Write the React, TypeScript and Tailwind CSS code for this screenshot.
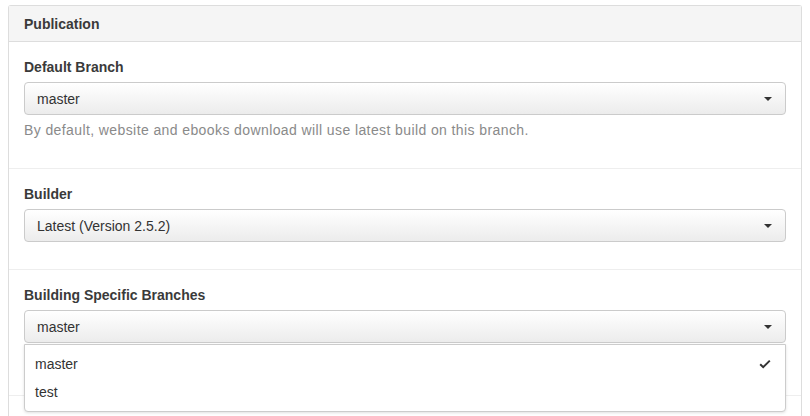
import React from "react";

function Caret() {
  return <span className="absolute right-[13px] top-1/2 -translate-y-1/2 w-0 h-0 border-l-[4px] border-r-[4px] border-t-[4px] border-l-transparent border-r-transparent border-t-[#333]" />;
}

function SelectBox({ value }: { value: string }) {
  return (
    <div className="relative h-[33px] rounded-[4px] border border-[#cbcbcb] bg-gradient-to-b from-[#ffffff] to-[#ececec] flex items-center pl-[12px] pt-[1px] text-[14px] text-[#333]">
      {value}
      <Caret />
    </div>
  );
}

export default function App() {
  return (
    <div className="w-[810px] h-[416px] overflow-hidden bg-white" style={{ fontFamily: '"Liberation Sans", Arial, sans-serif' }}>
      <div className="mx-2 mt-[5px] border border-[#dddddd] border-b-0 rounded-t-[3px] h-[420px]">
        <div className="h-[36px] bg-[#f5f5f5] border-b border-[#dddddd] flex items-center pt-[1px] px-[15px] text-[14px] font-bold text-[#3a3a3a]">
          Publication
        </div>
        <div className="px-[15px] pt-[15px] pb-[28px]">
          <div className="h-[20px] leading-[20px] text-[14px] font-bold text-[#3a3a3a] mb-[5px]">Default Branch</div>
          <SelectBox value="master" />
          <div className="mt-[5px] h-[20px] leading-[20px] text-[14px] tracking-[0.4px] text-[#8a8a8a]">
            By default, website and ebooks download will use latest build on this branch.
          </div>
        </div>
        <div className="border-t border-[#eeeeee] px-[15px] pt-[15px] pb-[27px]">
          <div className="h-[20px] leading-[20px] text-[14px] font-bold text-[#3a3a3a] mb-[5px]">Builder</div>
          <SelectBox value="Latest (Version 2.5.2)" />
        </div>
        <div className="border-t border-[#eeeeee] px-[15px] pt-[15px] pb-[52px]">
          <div className="h-[20px] leading-[20px] text-[14px] font-bold text-[#3a3a3a] mb-[5px]">Building Specific Branches</div>
          <div className="relative">
            <SelectBox value="master" />
            <div className="absolute left-0 right-0 top-[34px] z-10 bg-white border border-[#cccccc] rounded-b-[4px] shadow-[0_1px_3px_rgba(0,0,0,0.12)] py-[5px] text-[14px] text-[#333]">
              <div className="relative h-[28px] flex items-center pl-[10px]">
                master
                <svg className="absolute right-[14px] top-[9px]" width="12" height="10" viewBox="0 0 12 10">
                  <path d="M1.2 5.2 L4.2 8.2 L10.8 1.6" fill="none" stroke="#333" strokeWidth="2" />
                </svg>
              </div>
              <div className="h-[28px] flex items-center pl-[10px]">test</div>
            </div>
          </div>
        </div>
        <div className="border-t border-[#eeeeee] h-[40px]" />
      </div>
    </div>
  );
}
